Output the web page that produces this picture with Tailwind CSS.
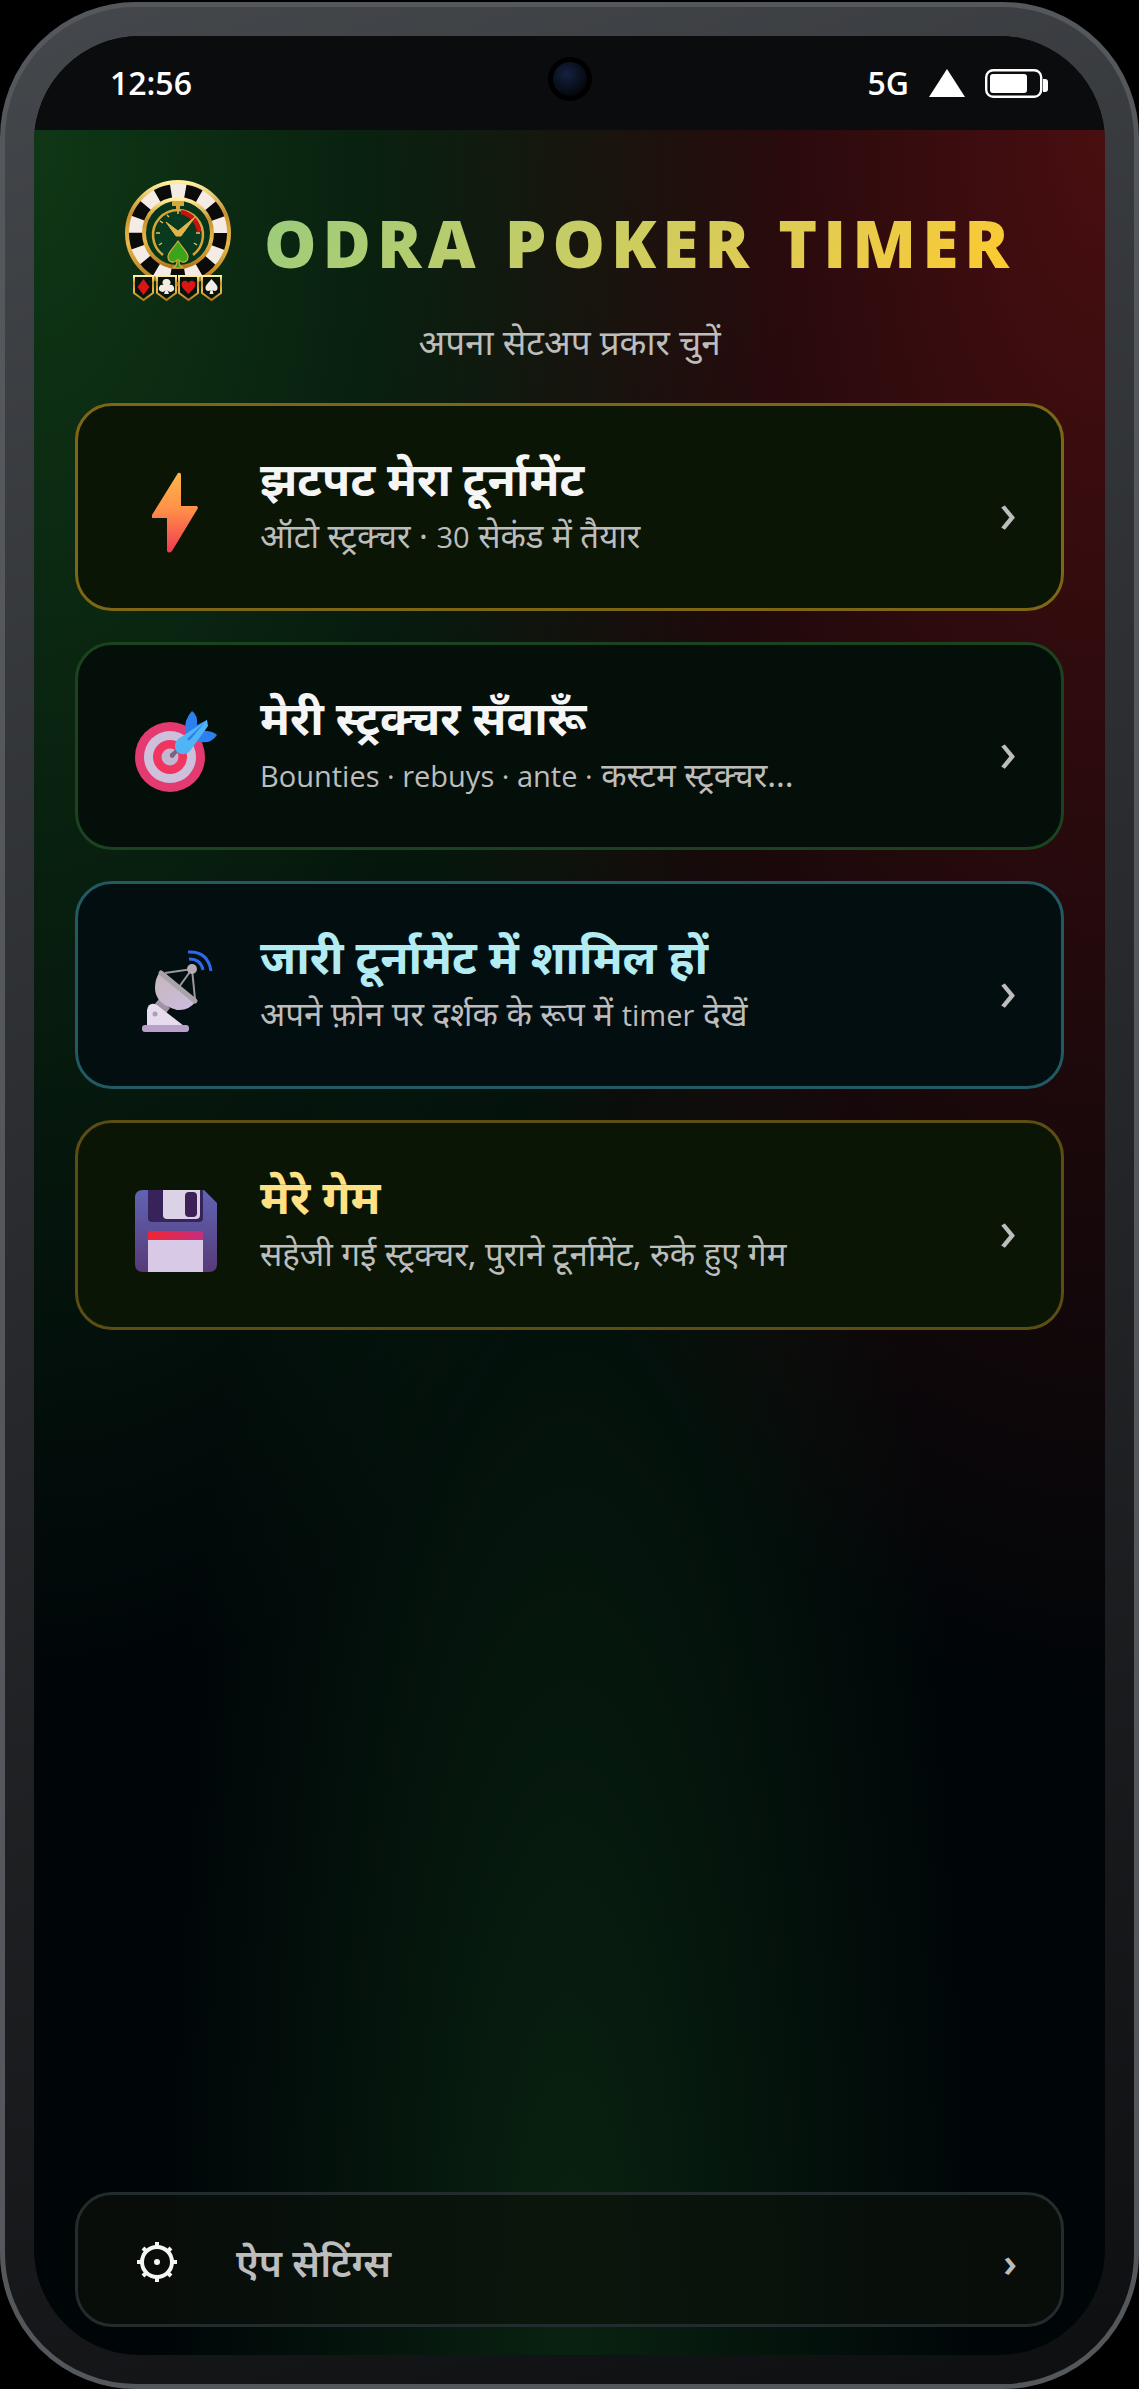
<!DOCTYPE html>
<html lang="hi">
<head>
    <meta charset="UTF-8">
    <meta name="viewport" content="width=device-width, initial-scale=1.0">
    <title>Odra Poker Timer</title>
    <script src="https://cdn.jsdelivr.net/npm/@tailwindcss/browser@4"></script>
</head>
<body class="bg-black font-['Noto_Sans','Noto_Sans_Devanagari',sans-serif] text-[#f5f5f5]">
    <div class="min-h-screen pt-[2px] flex">
        <!-- Phone frame -->
        <div class="flex-1 flex rounded-[136px] border-[5px] border-[#54575b] bg-linear-160 from-[#44474b] from-0% via-[#26282b] via-50% to-[#0e0f11] px-[29px] pt-[29px] pb-[29px]">
            <div class="flex-1 flex flex-col rounded-[106px] overflow-hidden bg-[#000508]">

                <!-- Status bar -->
                <header class="relative h-[94px] shrink-0 bg-[#0a0c0e] flex items-center justify-between pl-[76px] pr-[57px] font-['Open_Sans',sans-serif] text-[32px] font-semibold text-white">
                    <span>12:56</span>
                    <span class="absolute left-1/2 top-[21px] -translate-x-1/2 size-[44px] rounded-full border-[5px] border-black bg-[radial-gradient(circle_at_40%_35%,#142240,#04060a_75%)]"></span>
                    <div class="flex items-center gap-5">
                        <span>5G</span>
                        <svg class="w-9 h-7" viewBox="0 0 36 28" fill="#fff"><path d="M18 0 36 28H0z"/></svg>
                        <svg class="w-[63px] h-[29px]" viewBox="0 0 63 29">
                            <rect x="1.2" y="1.2" width="55" height="26.600" rx="7" fill="none" stroke="#fff" stroke-width="2.400"/>
                            <rect x="5" y="5" width="37" height="19" rx="3" fill="#fff"/>
                            <path d="M58 10h2q3 0 3 3v7q0 3-3 3h-2z" fill="#fff"/>
                        </svg>
                    </div>
                </header>

                <main class="flex-1 flex flex-col px-[41px] pt-[48px] pb-[28px] bg-[radial-gradient(ellipse_at_0%_0%,#1b5e2090,transparent_50%),radial-gradient(ellipse_at_100%_0%,#b71c1c66,transparent_50%),radial-gradient(ellipse_at_50%_100%,#1b5e2055,transparent_55%)]">
                    <div class="flex items-center justify-center gap-[32px]">
                        <svg class="w-[108px] h-[124px] shrink-0" viewBox="0 0 108 124">
                            <defs>
                                <linearGradient id="gold" x1="0" y1="0" x2="0" y2="1">
                                    <stop offset="0" stop-color="#fff0a0"/>
                                    <stop offset=".3" stop-color="#c8902c"/>
                                    <stop offset=".6" stop-color="#e8b84a"/>
                                    <stop offset="1" stop-color="#b07818"/>
                                </linearGradient>
                                <path id="shield" d="M0 0H19V17L9.500 24 0 17z"/>
                            </defs>
                            <circle cx="54" cy="55" r="42" fill="none" stroke="#0a0a0a" stroke-width="18"/>
                            <circle cx="54" cy="55" r="42" fill="none" stroke="#f4ece4" stroke-width="18" stroke-dasharray="14.660 14.660" stroke-dashoffset="7.330" transform="rotate(-90 54 55)"/>
                            <circle cx="54" cy="55" r="51" fill="none" stroke="url(#gold)" stroke-width="4"/>
                            <circle cx="54" cy="55" r="34" fill="#06351c" stroke="url(#gold)" stroke-width="4"/>
                            <path d="M48 23h12v5h-4v4h-4v-4h-4z" fill="#d8a63a"/>
                            <path d="M39 77A25 25 0 1 1 69 77" fill="#073a1f" stroke="#d6a53a" stroke-width="2.500"/>
                            <path d="M57 34A22 22 0 0 1 75 54" fill="none" stroke="#c81212" stroke-width="4.500"/>
                            <path d="M54 32v4M43 37l2 2M36 43l3 2M32 55h4M35 67l3-2M73 67l-3-2M72 55h4" stroke="#e6bd55" stroke-width="1.500"/>
                            <path d="M42 44 54 53 71 39 57 58h-5z" fill="#e0b54c" stroke="#e0b54c"/>
                            <path d="M54 63C60 72 64 74 64 79s-6 7-9 3c0 5 1 6 4 8H49c3-2 4-3 4-8-3 4-9 2-9-3s4-7 10-16z" fill="#3aa51c" stroke="#d9a93c" stroke-width="1.200"/>
                            <g fill="#06140c" stroke="url(#gold)" stroke-width="2">
                                <use href="#shield" x="10" y="98"/>
                                <use href="#shield" x="33" y="98"/>
                                <use href="#shield" x="55" y="98"/>
                                <use href="#shield" x="78" y="98"/>
                            </g>
                            <path d="m19.500 101 6 8-6 8-6-8z" fill="#dc1414"/>
                            <path d="M42.500 101a3.500 3.500 0 0 1 3 6 3.500 3.500 0 1 1-2 5l1.500 4h-5l1.500-4a3.500 3.500 0 1 1-2-5 3.500 3.500 0 0 1 3-6z" fill="#f4ece4"/>
                            <path d="M64.500 116c-5-5-7-7-7-10s5-5 7-1c2-4 7-2 7 1s-2 5-7 10z" fill="#dc1414"/>
                            <path d="M87.500 101c4 5 6 6 6 9s-3 4-5 2l1 4h-4l1-4c-2 2-5 1-5-2s2-4 6-9z" fill="#f4ece4"/>
                        </svg>
                        <h1 class="pt-1 font-['Open_Sans',sans-serif] text-[66px] leading-[96px] font-extrabold tracking-[6px] whitespace-nowrap bg-linear-135 from-[#97cc7e] to-[#ffca28] bg-clip-text text-transparent">ODRA POKER TIMER</h1>
                    </div>
                    <p class="mt-3 text-center text-[35px] leading-[56px] text-[#bdbdbd]">अपना सेटअप प्रकार चुनें</p>

                    <nav class="mt-[33px] flex flex-col gap-[31px]">
                        <a href="#" class="h-[208px] rounded-[37px] border-[3px] border-[#7d6616] bg-[#0a1506] flex items-center pl-[57px] pr-[44px]">
                            <svg class="size-[82px] shrink-0 mt-3" viewBox="0 0 82 82">
                                <defs><linearGradient id="bolt" x1="0" y1="0" x2="0" y2="1"><stop offset="0" stop-color="#ffb54a"/><stop offset=".45" stop-color="#ff9148"/><stop offset="1" stop-color="#f23a50"/></linearGradient></defs>
                                <path d="M43 1Q46 0 46 3V34H62L63 36 37 79Q34 82 32 79V46H17V43z" fill="url(#bolt)"/>
                            </svg>
                            <div class="flex-1 ml-[43px]">
                                <h2 class="mb-[10px] text-[46px] leading-[48px] font-bold">झटपट मेरा टूर्नामेंट</h2>
                                <p class="text-[33px] leading-[48px] text-[#bdbdbd]">ऑटो स्ट्रक्चर · <span class="font-['Open_Sans'] text-[29px]">30</span> सेकंड में तैयार</p>
                            </div>
                            <span class="mt-2 text-[58px] leading-[80px] text-[#bdbdbd]">›</span>
                        </a>
                        <a href="#" class="h-[208px] rounded-[37px] border-[3px] border-[#1b431f] bg-[#050f0a] flex items-center pl-[57px] pr-[44px]">
                            <svg class="size-[82px] shrink-0 mt-3" viewBox="0 0 82 82">
                                <circle cx="35" cy="46" r="35" fill="#e43a70"/>
                                <circle cx="35" cy="46" r="26" fill="#cdc0dc"/>
                                <circle cx="35" cy="46" r="17" fill="#f03560"/>
                                <circle cx="35" cy="46" r="8.500" fill="#c3b6d0"/>
                                <path d="m35 43 6-5 2 3-5 6q-4 0-3-4z" fill="#76657f"/>
                                <path d="M50 22Q49 8 57 0q6 4 5 14l10-5-2 11q8 0 12 4-6 9-17 7z" fill="#2b80ee"/>
                                <path d="M72 9 73 15 55 40Q50 46 42 41 37 34 43 28z" fill="#4fb5f4"/>
                                <path d="M70 11 53 27q-2 3 2 2z" fill="#2b80ee"/>
                            </svg>
                            <div class="flex-1 ml-[43px]">
                                <h2 class="mb-[10px] text-[46px] leading-[48px] font-bold">मेरी स्ट्रक्चर सँवारूँ</h2>
                                <p class="text-[33px] leading-[48px] text-[#bdbdbd]"><span class="font-['Open_Sans'] text-[29px]">Bounties · rebuys · ante ·</span> कस्टम स्ट्रक्चर...</p>
                            </div>
                            <span class="mt-2 text-[58px] leading-[80px] text-[#bdbdbd]">›</span>
                        </a>
                        <a href="#" class="h-[208px] rounded-[37px] border-[3px] border-[#215a62] bg-[#030e10] flex items-center pl-[57px] pr-[44px]">
                            <svg class="size-[82px] shrink-0 mt-3" viewBox="0 0 82 82">
                                <defs><linearGradient id="dish" x1="0" y1="0" x2="1" y2="1"><stop offset="0" stop-color="#c4b8b8"/><stop offset="1" stop-color="#cdbce4"/></linearGradient></defs>
                                <path d="M53 2Q73 1 76 21M54 9Q66 9 68 20" fill="none" stroke="#2d68ee" stroke-width="3"/>
                                <path d="M30 23 57 19 44 37M57 19 60 49" fill="none" stroke="#9c989c" stroke-width="2"/>
                                <circle cx="57" cy="19" r="5" fill="#b4aeb4"/>
                                <path d="M24 49 35 58 29 66 18 56z" fill="#9e94a4"/>
                                <path d="M25 22 61 51Q54 61 42 60 20 54 20 38 20 28 25 22z" fill="url(#dish)"/>
                                <path d="m26 23 34 28" stroke="#aaa4aa" stroke-width="5" stroke-linecap="round"/>
                                <path d="M12 76V60q2-9 10-5L49 76z" fill="#e6dcee"/>
                                <circle cx="20" cy="64" r="2.500" fill="#aa9fb4"/>
                                <rect x="7" y="75" width="47" height="7" rx="3" fill="#b9a0cc"/>
                            </svg>
                            <div class="flex-1 ml-[43px]">
                                <h2 class="mb-[10px] text-[46px] leading-[48px] font-bold text-[#b2ebf2]">जारी टूर्नामेंट में शामिल हों</h2>
                                <p class="text-[33px] leading-[48px] text-[#bdbdbd]">अपने फ़ोन पर दर्शक के रूप में <span class="font-['Open_Sans'] text-[29px]">timer</span> देखें</p>
                            </div>
                            <span class="mt-2 text-[58px] leading-[80px] text-[#bdbdbd]">›</span>
                        </a>
                        <a href="#" class="h-[210px] rounded-[37px] border-[3px] border-[#5c4d12] bg-[#0a1506] flex items-center pl-[57px] pr-[44px]">
                            <svg class="size-[82px] shrink-0 mt-3" viewBox="0 0 82 82">
                                <defs>
                                    <linearGradient id="disk" x1="0" y1="0" x2="0" y2="1"><stop offset="0" stop-color="#6064b4"/><stop offset="1" stop-color="#583a78"/></linearGradient>
                                    <linearGradient id="label"><stop offset="0" stop-color="#ee2632"/><stop offset="1" stop-color="#c82c80"/></linearGradient>
                                </defs>
                                <path d="M8 0H69L82 13V74q0 8-8 8H8q-8 0-8-8V8q0-8 8-8z" fill="url(#disk)"/>
                                <path d="M13 0H68V28q0 4-4 4H17q-4 0-4-4z" fill="#37235a"/>
                                <path d="M28 0H65V25q0 4-4 4H32q-4 0-4-4z" fill="#dcd2e6"/>
                                <rect x="50" y="2" width="12" height="25" rx="4" fill="#3d2156"/>
                                <path d="M13 50V44q0-3 3-3H65q3 0 3 3v6z" fill="url(#label)"/>
                                <path d="M13 50H68V82H13z" fill="#d8cae6"/>
                            </svg>
                            <div class="flex-1 ml-[43px]">
                                <h2 class="mb-[10px] text-[46px] leading-[48px] font-bold text-[#ffe082]">मेरे गेम</h2>
                                <p class="text-[33px] leading-[48px] text-[#bdbdbd]">सहेजी गई स्ट्रक्चर, पुराने टूर्नामेंट, रुके हुए गेम</p>
                            </div>
                            <span class="mt-2 text-[58px] leading-[80px] text-[#bdbdbd]">›</span>
                        </a>
                    </nav>

                    <a href="#" class="mt-auto h-[135px] rounded-[37px] border-[3px] border-[#222c2c] bg-[#0b110b]/70 flex items-center pt-1 pl-[57px] pr-[44px] text-[#bdbdbd]">
                        <svg class="size-[44px] shrink-0" viewBox="0 0 44 44" fill="none" stroke="#f5f5f5">
                            <circle cx="22" cy="22" r="15" stroke-width="4"/>
                            <circle cx="22" cy="22" r="3" fill="#f5f5f5" stroke="none"/>
                            <path d="M22 2v6M22 36v6M2 22h6M36 22h6M8 8l4 4M32 32l4 4M36 8l-4 4M12 32l-4 4" stroke-width="4"/>
                        </svg>
                        <span class="flex-1 ml-[57px] text-[39px] leading-[56px] font-semibold">ऐप सेटिंग्स</span>
                        <span class="text-[40px] leading-[56px] font-semibold">›</span>
                    </a>
                </main>
            </div>
        </div>
    </div>
</body>
</html>
